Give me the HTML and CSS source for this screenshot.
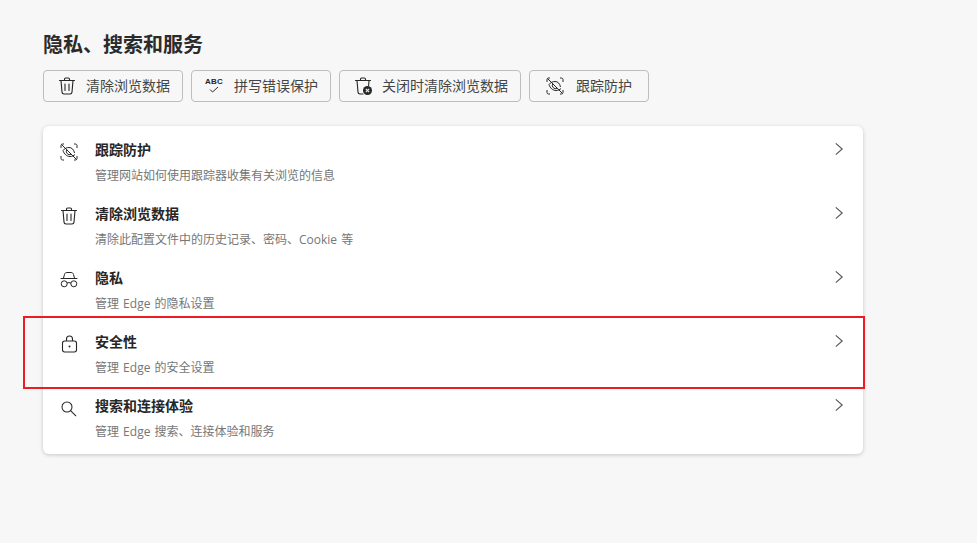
FILE: index.html
```html
<!DOCTYPE html>
<html lang="zh-CN">
<head>
<meta charset="utf-8">
<title>隐私、搜索和服务</title>
<link rel="stylesheet" href="styles.css">
</head>
<body>
<svg class="defs" width="0" height="0" aria-hidden="true">
  <symbol id="i-trash" viewBox="0 0 20 20"><path d="M2.500 4.500h15M7.500 4.500V3.200c0-.7.500-1.200 1.200-1.200h2.600c.7 0 1.200.5 1.200 1.200v1.300M4 4.500l1 11.600c.1 1.100 1 1.900 2 1.900h6c1 0 1.900-.8 2-1.900l1-11.600M8 8v6.500M12 8v6.500" fill="none" stroke="currentColor" stroke-width="1.100" stroke-linecap="round"/></symbol>
  <symbol id="i-track" viewBox="0 0 20 20"><path d="M2 6V3.500C2 2.700 2.700 2 3.500 2H5M15 2h1.500C17.300 2 18 2.700 18 3.500V6M18 14v2.500c0 .8-.7 1.500-1.500 1.500H15M5 18H3.500C2.700 18 2 17.300 2 16.500V14M2.500 2.500l15 15M4 8.500C5.500 6.500 7.800 5.500 10 5.500c2.800 0 4.800 2 5.500 5.500M16 12.500c-1.200 1.200-3 2-5 2-3.200 0-6-2.500-7-6M7.800 7.800a3.200 3.200 0 0 0 4.400 4.400" fill="none" stroke="currentColor" stroke-width="1"/></symbol>
  <symbol id="i-check" viewBox="0 0 10 7"><path d="M1 3.500l2.500 2.500 5.500-5" fill="none" stroke="currentColor" stroke-width="1"/></symbol>
  <symbol id="i-closetrash" viewBox="0 0 20 20"><path d="M2.500 4.500h15M7.500 4.500V3.200c0-.7.500-1.200 1.200-1.200h2.600c.7 0 1.200.5 1.200 1.200v1.300M4 4.500l1 11.600c.1 1.100 1 1.900 2 1.900h3M16 4.500l-.4 5" fill="none" stroke="currentColor" stroke-width="1.100" stroke-linecap="round"/><circle cx="14.500" cy="14.500" r="4.500" fill="currentColor"/><path d="M12.800 12.800l3.400 3.400M16.200 12.800l-3.400 3.400" stroke="#f7f7f7" stroke-width="1.100"/></symbol>
  <symbol id="i-glasses" viewBox="0 0 20 20"><path d="M4.500 8l1-3.500C5.800 3 6.800 2.500 8 2.500h4c1.200 0 2.200.5 2.500 2l1 3.500M2 8.500h16M8.300 13c1-.6 2.400-.6 3.400 0" fill="none" stroke="currentColor" stroke-width="1" stroke-linecap="round"/><circle cx="5.200" cy="13.800" r="3" fill="none" stroke="currentColor" stroke-width="1"/><circle cx="14.800" cy="13.800" r="3" fill="none" stroke="currentColor" stroke-width="1"/></symbol>
  <symbol id="i-lock" viewBox="0 0 20 20"><path d="M7.500 7V5a3 3 0 0 1 6 0v2" fill="none" stroke="currentColor" stroke-width="1.100"/><rect x="3.500" y="7" width="14" height="11" rx="2.200" fill="none" stroke="currentColor" stroke-width="1.100"/><circle cx="10.500" cy="12.500" r="1" fill="currentColor"/></symbol>
  <symbol id="i-search" viewBox="0 0 20 20"><circle cx="8" cy="9" r="5" fill="none" stroke="currentColor" stroke-width="1.050"/><path d="M11.600 12.600l5.200 5.200" fill="none" stroke="currentColor" stroke-width="1.050" stroke-linecap="round"/></symbol>
  <symbol id="i-chev" viewBox="0 0 20 20"><path d="M6 3l8 7-8 7" fill="none" stroke="currentColor" stroke-width="1.400"/></symbol>
</svg>

<main class="page">
  <h1 class="title">隐私、搜索和服务</h1>

  <nav class="actions">
    <button class="action action-a"><svg class="icon"><use href="#i-trash"/></svg><span>清除浏览数据</span></button>
    <button class="action action-b"><span class="abc"><span class="abc-text">ABC</span><svg class="abc-check"><use href="#i-check"/></svg></span><span>拼写错误保护</span></button>
    <button class="action action-c"><svg class="icon"><use href="#i-closetrash"/></svg><span>关闭时清除浏览数据</span></button>
    <button class="action action-d"><svg class="icon"><use href="#i-track"/></svg><span>跟踪防护</span></button>
  </nav>

  <section class="card">
    <a class="row">
      <svg class="icon row-icon"><use href="#i-track"/></svg>
      <div class="row-text"><div class="row-title">跟踪防护</div><div class="row-sub">管理网站如何使用跟踪器收集有关浏览的信息</div></div>
      <svg class="chev"><use href="#i-chev"/></svg>
    </a>
    <a class="row">
      <svg class="icon row-icon"><use href="#i-trash"/></svg>
      <div class="row-text"><div class="row-title">清除浏览数据</div><div class="row-sub">清除此配置文件中的历史记录、密码、Cookie 等</div></div>
      <svg class="chev"><use href="#i-chev"/></svg>
    </a>
    <a class="row">
      <svg class="icon row-icon"><use href="#i-glasses"/></svg>
      <div class="row-text"><div class="row-title">隐私</div><div class="row-sub">管理 Edge 的隐私设置</div></div>
      <svg class="chev"><use href="#i-chev"/></svg>
    </a>
    <a class="row">
      <svg class="icon row-icon"><use href="#i-lock"/></svg>
      <div class="row-text"><div class="row-title">安全性</div><div class="row-sub">管理 Edge 的安全设置</div></div>
      <svg class="chev"><use href="#i-chev"/></svg>
    </a>
    <a class="row">
      <svg class="icon row-icon"><use href="#i-search"/></svg>
      <div class="row-text"><div class="row-title">搜索和连接体验</div><div class="row-sub">管理 Edge 搜索、连接体验和服务</div></div>
      <svg class="chev"><use href="#i-chev"/></svg>
    </a>
  </section>

  <div class="highlight"></div>
</main>
</body>
</html>
```

FILE: styles.css
```css
* { box-sizing: border-box; }

html, body {
  margin: 0;
  height: 100%;
  background: #f7f7f7;
  overflow: hidden;
}

body {
  font-family: "Open Sans", "Noto Sans CJK SC", sans-serif;
  color: #262626;
}

.defs { position: absolute; }

.page {
  position: relative;
  width: 977px;
  height: 543px;
  padding: 31px 0 0 43px;
}

.title {
  margin: 0;
  height: 28px;
  font-size: 20px;
  line-height: 28px;
  font-weight: 700;
  color: #2b2b2b;
}

.actions {
  display: flex;
  gap: 8px;
  margin-top: 11px;
}

.action {
  display: flex;
  align-items: center;
  gap: 9px;
  height: 32px;
  padding: 0 0 2px 13px;
  background: #f7f7f7;
  border: 1px solid #bdbdbd;
  border-radius: 4px;
  font: inherit;
  font-size: 14px;
  color: #454545;
}

.action .icon { margin-top: 2px; }

.action-a, .action-b { width: 140px; }
.action-c { width: 182px; }
.action-d { width: 120px; padding-left: 15px; gap: 11px; }
.action-b { padding-left: 14px; gap: 12px; }

.icon {
  flex: none;
  width: 20px;
  height: 20px;
  color: #262626;
}

.abc {
  display: flex;
  flex-direction: column;
  align-items: center;
  width: 16px;
  height: 17px;
  margin-top: 1px;
  color: #262626;
}

.abc-text {
  font-family: "Liberation Sans", sans-serif;
  font-size: 8px;
  line-height: 9px;
  letter-spacing: 0.2px;
  font-weight: 700;
}

.abc-check {
  width: 10px;
  height: 7px;
}

.card {
  margin-top: 24px;
  width: 820px;
  height: 328px;
  padding: 4px 0;
  background: #fff;
  border-radius: 6px;
  box-shadow: 0 1px 4px rgba(0, 0, 0, 0.2);
}

.row {
  display: flex;
  height: 64px;
  padding: 0 16px;
}

.row-icon {
  margin-top: 12px;
  margin-right: 16px;
}

.row-text {
  flex: 1;
  padding-top: 8px;
}

.row-title {
  height: 24px;
  font-size: 14px;
  line-height: 24px;
  font-weight: 700;
  color: #262626;
}

.row-sub {
  margin-top: 5px;
  height: 18px;
  font-size: 12px;
  line-height: 18px;
  word-spacing: 1px;
  color: #767676;
}

.chev {
  flex: none;
  width: 16px;
  height: 16px;
  margin: 11px 0 0 0;
  color: #555;
}

.highlight {
  position: absolute;
  left: 23px;
  top: 316px;
  width: 842px;
  height: 73px;
  border: 2px solid #ed1c24;
}
```
